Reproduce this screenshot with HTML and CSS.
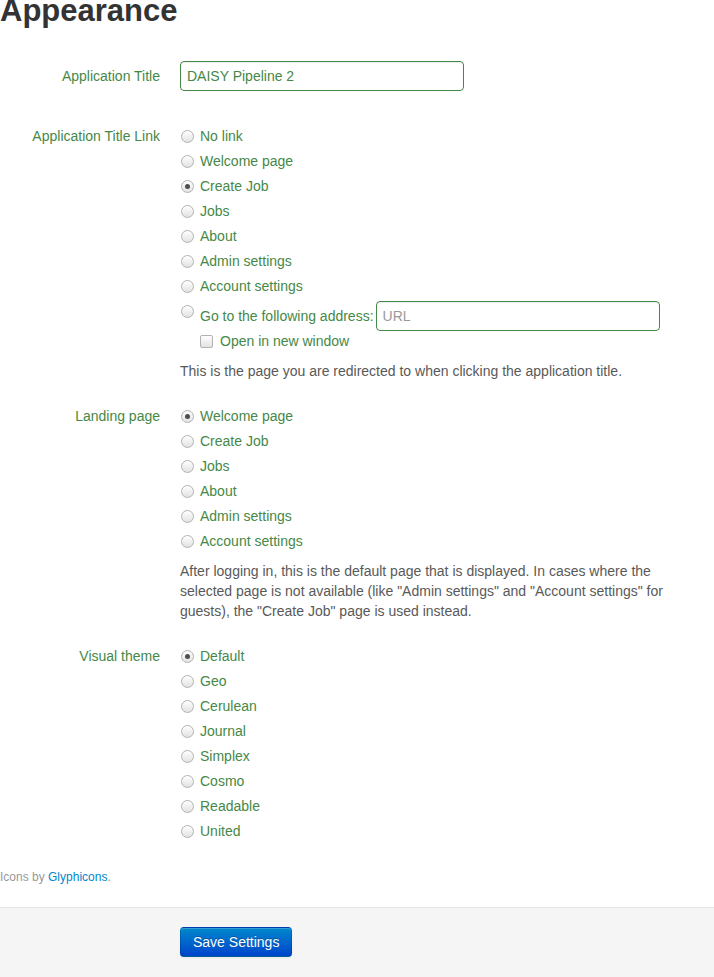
FILE: index.html
```html
<!DOCTYPE html>
<html lang="en">
<head>
<meta charset="utf-8">
<title>Appearance</title>
<link rel="stylesheet" href="styles.css">
</head>
<body>
<h1 class="page-title">Appearance</h1>
<form class="settings">
  <div class="group group-input">
    <label class="group-label" for="title">Application Title</label>
    <div class="controls">
      <input class="text-input" id="title" type="text" value="DAISY Pipeline 2">
    </div>
  </div>

  <div class="group">
    <span class="group-label">Application Title Link</span>
    <div class="controls radios">
      <label class="option"><input class="radio" type="radio" name="link"><span>No link</span></label>
      <label class="option"><input class="radio" type="radio" name="link"><span>Welcome page</span></label>
      <label class="option"><input class="radio" type="radio" name="link" checked><span>Create Job</span></label>
      <label class="option"><input class="radio" type="radio" name="link"><span>Jobs</span></label>
      <label class="option"><input class="radio" type="radio" name="link"><span>About</span></label>
      <label class="option"><input class="radio" type="radio" name="link"><span>Admin settings</span></label>
      <label class="option"><input class="radio" type="radio" name="link"><span>Account settings</span></label>
      <div class="option option-url">
        <input class="radio" type="radio" name="link">
        <span class="url-label">Go to the following address:</span>
        <input class="text-input url-input" type="text" placeholder="URL">
      </div>
      <label class="option option-check"><input class="check" type="checkbox"><span>Open in new window</span></label>
      <p class="help">This is the page you are redirected to when clicking the application title.</p>
    </div>
  </div>

  <div class="group">
    <span class="group-label">Landing page</span>
    <div class="controls radios">
      <label class="option"><input class="radio" type="radio" name="landing" checked><span>Welcome page</span></label>
      <label class="option"><input class="radio" type="radio" name="landing"><span>Create Job</span></label>
      <label class="option"><input class="radio" type="radio" name="landing"><span>Jobs</span></label>
      <label class="option"><input class="radio" type="radio" name="landing"><span>About</span></label>
      <label class="option"><input class="radio" type="radio" name="landing"><span>Admin settings</span></label>
      <label class="option"><input class="radio" type="radio" name="landing"><span>Account settings</span></label>
      <p class="help">After logging in, this is the default page that is displayed. In cases where the selected page is not available (like "Admin settings" and "Account settings" for guests), the "Create Job" page is used instead.</p>
    </div>
  </div>

  <div class="group">
    <span class="group-label">Visual theme</span>
    <div class="controls radios">
      <label class="option"><input class="radio" type="radio" name="theme" checked><span>Default</span></label>
      <label class="option"><input class="radio" type="radio" name="theme"><span>Geo</span></label>
      <label class="option"><input class="radio" type="radio" name="theme"><span>Cerulean</span></label>
      <label class="option"><input class="radio" type="radio" name="theme"><span>Journal</span></label>
      <label class="option"><input class="radio" type="radio" name="theme"><span>Simplex</span></label>
      <label class="option"><input class="radio" type="radio" name="theme"><span>Cosmo</span></label>
      <label class="option"><input class="radio" type="radio" name="theme"><span>Readable</span></label>
      <label class="option"><input class="radio" type="radio" name="theme"><span>United</span></label>
    </div>
  </div>

  <p class="credits">Icons by <a href="#">Glyphicons</a>.</p>

  <div class="form-actions">
    <button class="btn-primary" type="button">Save Settings</button>
  </div>
</form>
</body>
</html>
```

FILE: styles.css
```css
html, body {
  margin: 0;
  padding: 0;
  background: #fff;
}

body {
  font-family: "Liberation Sans", Arial, sans-serif;
  font-size: 14px;
  line-height: 20px;
  color: #333;
}

.page-title {
  margin: 0 0 39px;
  font-size: 31px;
  line-height: 22px;
  font-weight: bold;
  color: #333;
}

.settings {
  margin: 0;
}

.group {
  display: grid;
  grid-template-columns: 160px 500px;
  column-gap: 20px;
  margin-bottom: 20px;
}

.group-input {
  margin-bottom: 30px;
}

.group-label {
  padding-top: 5px;
  text-align: right;
  color: #468847;
}

.controls {
  min-width: 0;
}

.radios {
  padding-top: 5px;
}

.option {
  display: flex;
  align-items: flex-start;
  color: #468847;
  min-height: 20px;
  margin-bottom: 5px;
  cursor: pointer;
}

.radio,
.check {
  -webkit-appearance: none;
  appearance: none;
  flex: none;
  width: 13px;
  height: 13px;
  margin: 4px 6px 0 1px;
  border: 1px solid #b2b2b2;
  background: linear-gradient(#ffffff, #e2e2e2);
  box-sizing: border-box;
  position: relative;
}

.radio {
  border-radius: 50%;
}

.radio:checked::after {
  content: "";
  position: absolute;
  left: 3px;
  top: 3px;
  width: 5px;
  height: 5px;
  border-radius: 50%;
  background: #4d4d4d;
}

.check {
  border-radius: 2px;
  margin: 4px 7px 0 0;
}

.option-url {
  align-items: center;
  margin-bottom: 0;
}

.option-url .radio {
  align-self: flex-start;
}

.url-label {
  white-space: nowrap;
  margin-top: -1px;
}

.option-check {
  margin-left: 20px;
  margin-bottom: 0;
}

.text-input {
  box-sizing: border-box;
  width: 284px;
  height: 30px;
  padding: 4px 6px;
  font-family: "Liberation Sans", Arial, sans-serif;
  font-size: 14px;
  line-height: 20px;
  color: #468847;
  background: #fff;
  border: 1px solid #468847;
  border-radius: 4px;
  box-shadow: inset 0 1px 1px rgba(0, 0, 0, 0.075);
  outline: none;
}

.text-input::placeholder {
  color: #999;
}

.url-input {
  margin-left: 2px;
}

.help {
  margin: 10px 0 0;
  color: #595959;
}

.credits {
  margin: 22px 0 21px;
  font-size: 12px;
  line-height: 18px;
  color: #999;
}

.credits a {
  color: #0088cc;
  text-decoration: none;
}

.form-actions {
  background: #f5f5f5;
  border-top: 1px solid #e5e5e5;
  padding: 19px 20px 20px 180px;
}

.btn-primary {
  display: inline-block;
  box-sizing: border-box;
  height: 30px;
  padding: 4px 12px;
  font-family: "Liberation Sans", Arial, sans-serif;
  font-size: 14px;
  line-height: 20px;
  color: #fff;
  text-shadow: 0 -1px 0 rgba(0, 0, 0, 0.25);
  background: linear-gradient(#0088cc, #0044cc);
  border: 1px solid rgba(0, 0, 0, 0.15);
  border-bottom-color: rgba(0, 0, 0, 0.3);
  border-radius: 4px;
  box-shadow: inset 0 1px 0 rgba(255, 255, 255, 0.2), 0 1px 2px rgba(0, 0, 0, 0.05);
  cursor: pointer;
}
```
